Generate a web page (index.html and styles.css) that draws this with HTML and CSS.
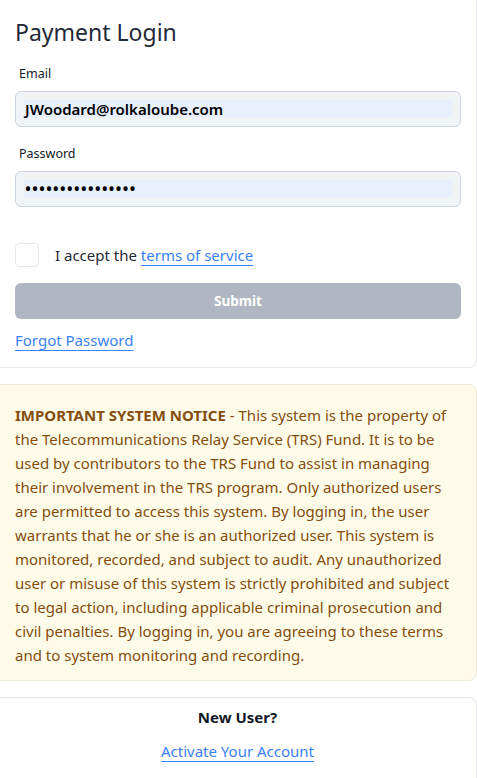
FILE: index.html
```html
<!DOCTYPE html>
<html lang="en">
<head>
<meta charset="utf-8">
<title>Payment Login</title>
<link rel="stylesheet" href="styles.css">
</head>
<body>
<div class="page">
  <section class="card login">
    <h1 class="title">Payment Login</h1>
    <div class="field">
      <label class="label">Email</label>
      <div class="input"><span class="autofill email">JWoodard@rolkaloube.com</span></div>
    </div>
    <div class="field">
      <label class="label">Password</label>
      <div class="input"><span class="autofill dots">••••••••••••••••</span></div>
    </div>
    <div class="accept">
      <span class="checkbox"></span>
      <span class="accept-text">I accept the <a class="link" href="#">terms of service</a></span>
    </div>
    <button class="submit" type="button">Submit</button>
    <a class="link forgot" href="#">Forgot Password</a>
  </section>
  <section class="card notice">
    <p><strong>IMPORTANT SYSTEM NOTICE</strong> - This system is the property of the Telecommunications Relay Service (TRS) Fund. It is to be used by contributors to the TRS Fund to assist in managing their involvement in the TRS program. Only authorized users are permitted to access this system. By logging in, the user warrants that he or she is an authorized user. This system is monitored, recorded, and subject to audit. Any unauthorized user or misuse of this system is strictly prohibited and subject to legal action, including applicable criminal prosecution and civil penalties. By logging in, you are agreeing to these terms and to system monitoring and recording.</p>
  </section>
  <section class="card newuser">
    <div class="new-title">New User?</div>
    <a class="link" href="#">Activate Your Account</a>
  </section>
</div>
</body>
</html>
```

FILE: styles.css
```css
html, body {
  margin: 0;
  padding: 0;
  background: #ffffff;
  overflow: hidden;
}
body {
  font-family: "Noto Sans", "Open Sans", sans-serif;
  color: #212529;
}
.page {
  margin: -6px 0 0 -6px;
  width: 483px;
  display: flex;
  flex-direction: column;
  gap: 16px;
}
.card {
  border: 1px solid #e5e7eb;
  border-radius: 8px;
  background: #ffffff;
  box-sizing: border-box;
}
.login {
  padding: 15px 15px 15px 20px;
  display: flex;
  flex-direction: column;
}
.title {
  margin: 6px 0 0 0;
  font-size: 23px;
  font-weight: 400;
  line-height: 32px;
  height: 32px;
  color: #1f2937;
}
.field {
  display: flex;
  flex-direction: column;
}
.label {
  font-size: 12.5px;
  line-height: 18px;
  margin: 17px 0 0 4px;
  color: #111827;
}
.field + .field .label {
  margin-top: 18px;
}
.input {
  margin-top: 8px;
  height: 36px;
  box-sizing: border-box;
  border: 1px solid #cbd5e1;
  border-radius: 6px;
  background: #f1f4f7;
  padding: 8px 8px 8px 8px;
  display: flex;
}
.autofill {
  flex: 1;
  background: #e8f0fe;
  height: 18px;
  line-height: 18px;
  font-size: 15px;
  font-weight: 600;
  color: #000;
  padding-left: 1px;
}
.dots {
  font-size: 16px;
  letter-spacing: 0.95px;
}
.accept {
  margin-top: 36px;
  display: flex;
  align-items: center;
  gap: 16px;
}
.checkbox {
  width: 24px;
  height: 24px;
  box-sizing: border-box;
  border: 1px solid #e5e7eb;
  border-radius: 4px;
  background: #fff;
}
.accept-text {
  font-size: 15px;
  line-height: 24px;
  color: #1f2937;
}
.link {
  color: #3b82f6;
  text-decoration: underline;
  text-decoration-color: #3b82f6;
  text-underline-offset: 4px;
}
.submit {
  margin-top: 16px;
  height: 36px;
  border: none;
  border-radius: 6px;
  background: #b1b7c2;
  color: #ffffff;
  font-family: "Noto Sans", "Open Sans", sans-serif;
  font-weight: 700;
  font-size: 13.5px;
}
.forgot {
  margin-top: 9px;
  align-self: flex-start;
  font-size: 15px;
  line-height: 24px;
}
.notice {
  background: #fefce8;
  border-color: #efead6;
  padding: 18px 16px 13px 20px;
}
.notice p {
  margin: 0;
  font-size: 15px;
  line-height: 24px;
  color: #854d0e;
}
.notice strong {
  font-weight: 700;
}
.newuser {
  padding: 7px 16px 20px 20px;
  display: flex;
  flex-direction: column;
  align-items: center;
  height: 100px;
}
.new-title {
  font-weight: 700;
  font-size: 15px;
  line-height: 24px;
  color: #111827;
}
.newuser .link {
  margin-top: 10px;
  font-size: 15px;
  line-height: 24px;
}
```
